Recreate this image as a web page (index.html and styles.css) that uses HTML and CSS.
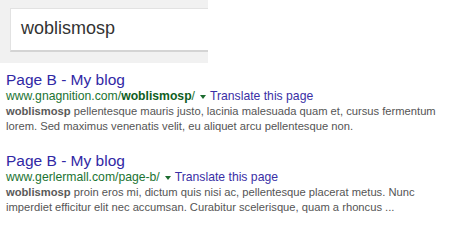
FILE: index.html
```html
<!DOCTYPE html>
<html>
<head>
<meta charset="utf-8">
<link rel="stylesheet" href="styles.css">
</head>
<body>
<div class="header">
  <div class="searchbox"><span class="query">woblismosp</span></div>
</div>
<div class="results">
  <div class="result">
    <div class="title">Page B - My blog</div>
    <div class="urlline"><span class="url">www.gnagnition.com/<b>woblismosp</b>/</span><span class="arrow"></span><span class="translate">Translate this page</span></div>
    <div class="snippet"><b>woblismosp</b> pellentesque mauris justo, lacinia malesuada quam et, cursus fermentum lorem. Sed maximus venenatis velit, eu aliquet arcu pellentesque non.</div>
  </div>
  <div class="result">
    <div class="title">Page B - My blog</div>
    <div class="urlline"><span class="url">www.gerlermall.com/page-b/</span><span class="arrow"></span><span class="translate">Translate this page</span></div>
    <div class="snippet"><b>woblismosp</b> proin eros mi, dictum quis nisi ac, pellentesque placerat metus. Nunc imperdiet efficitur elit nec accumsan. Curabitur scelerisque, quam a rhoncus ...</div>
  </div>
</div>
</body>
</html>
```
FILE: styles.css
```css
html, body {
  margin: 0;
  padding: 0;
  background: #ffffff;
  font-family: "Liberation Sans", Arial, sans-serif;
}
.header {
  width: 208px;
  height: 63px;
  background: #f1f1f1;
  padding: 8px 0 0 10px;
  box-sizing: border-box;
  overflow: hidden;
}
.searchbox {
  height: 44px;
  width: 220px;
  box-sizing: border-box;
  background: #ffffff;
  border: 1px solid #e2e2e2;
  border-bottom: 2px solid #d4d4d4;
  display: flex;
  align-items: center;
  padding-left: 10px;
  padding-bottom: 2px;
}
.query {
  font-size: 18px;
  color: #333333;
}
.results {
  padding: 7px 0 0 6px;
}
.result {
  margin-bottom: 18px;
}
.title {
  font-size: 15.5px;
  line-height: 19px;
  color: #3128a5;
}
.urlline {
  font-size: 12.2px;
  line-height: 15px;
  display: flex;
  align-items: center;
  white-space: nowrap;
}
.url {
  color: #1b7332;
}
.url b {
  color: #0f5e22;
}
.arrow {
  display: inline-block;
  width: 0;
  height: 0;
  border-left: 3px solid transparent;
  border-right: 3px solid transparent;
  border-top: 4px solid #1b6b2e;
  margin: 1px 4px 0 5px;
}
.translate {
  color: #3a2fa6;
}
.snippet {
  font-size: 11.2px;
  line-height: 14.5px;
  color: #555555;
  width: 440px;
}
.snippet b {
  color: #5a5a5a;
}
```
